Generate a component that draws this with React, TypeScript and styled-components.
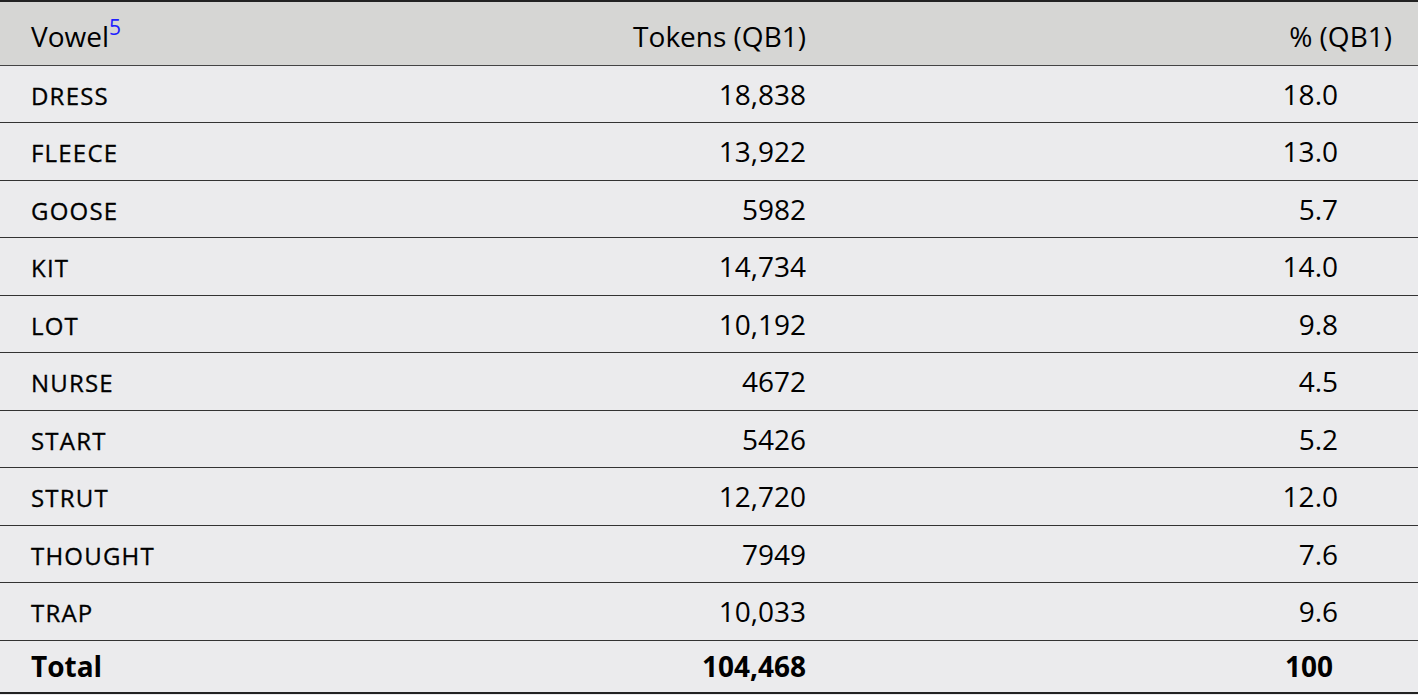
import React from "react";
import styled, { createGlobalStyle } from "styled-components";

const GlobalStyle = createGlobalStyle`
    html, body {
        margin: 0;
        padding: 0;
        background: #ebebed;
    }
    body {
        font-family: "Open Sans", "Noto Sans", sans-serif;
        color: #000;
    }
`;

const Table = styled.table`
    width: 1418px;
    border-collapse: collapse;
    table-layout: fixed;
    background: #ebebed;
    border-top: 2px solid #222;
    border-bottom: 2px solid #222;
    font-size: 28px;
`;

const HeadRow = styled.tr`
    background: #d6d6d4;
    height: 64px;
    border-bottom: 1px solid #444;
`;

const Row = styled.tr<{ $total?: boolean }>`
    height: ${(p) => (p.$total ? "53px" : "57.5px")};
    border-bottom: ${(p) => (p.$total ? "none" : "1px solid #333")};
    font-weight: ${(p) => (p.$total ? 700 : 400)};
`;

const HeadCell = styled.th<{ $align?: "left" | "right" }>`
    font-weight: 400;
    text-align: ${(p) => p.$align || "left"};
    padding: 6px 26px 0 31px;
    vertical-align: middle;
    white-space: nowrap;
`;

const Cell = styled.td<{ $align?: "left" | "right"; $padRight?: number }>`
    text-align: ${(p) => p.$align || "left"};
    padding: 0 ${(p) => p.$padRight ?? 26}px 0 31px;
    vertical-align: middle;
    white-space: nowrap;
`;

const SmallCaps = styled.span`
    font-size: 24px;
    letter-spacing: 1.2px;
    -webkit-text-stroke: 0.3px #000;
`;

const Note = styled.sup`
    color: #2020ff;
    font-size: 21px;
    vertical-align: 12px;
    line-height: 0;
`;

const rows: [string, string, string][] = [
    ["DRESS", "18,838", "18.0"],
    ["FLEECE", "13,922", "13.0"],
    ["GOOSE", "5982", "5.7"],
    ["KIT", "14,734", "14.0"],
    ["LOT", "10,192", "9.8"],
    ["NURSE", "4672", "4.5"],
    ["START", "5426", "5.2"],
    ["STRUT", "12,720", "12.0"],
    ["THOUGHT", "7949", "7.6"],
    ["TRAP", "10,033", "9.6"],
];

export default function App() {
    return (
        <>
            <GlobalStyle />
            <Table>
                <colgroup>
                    <col style={{ width: 416 }} />
                    <col style={{ width: 416 }} />
                    <col style={{ width: 586 }} />
                </colgroup>
                <thead>
                    <HeadRow>
                        <HeadCell>
                            Vowel<Note>5</Note>
                        </HeadCell>
                        <HeadCell $align="right">Tokens (QB1)</HeadCell>
                        <HeadCell $align="right">% (QB1)</HeadCell>
                    </HeadRow>
                </thead>
                <tbody>
                    {rows.map(([vowel, tokens, pct]) => (
                        <Row key={vowel}>
                            <Cell>
                                <SmallCaps>{vowel}</SmallCaps>
                            </Cell>
                            <Cell $align="right">{tokens}</Cell>
                            <Cell $align="right" $padRight={80}>{pct}</Cell>
                        </Row>
                    ))}
                    <Row $total>
                        <Cell>Total</Cell>
                        <Cell $align="right">104,468</Cell>
                        <Cell $align="right" $padRight={85}>100</Cell>
                    </Row>
                </tbody>
            </Table>
        </>
    );
}
